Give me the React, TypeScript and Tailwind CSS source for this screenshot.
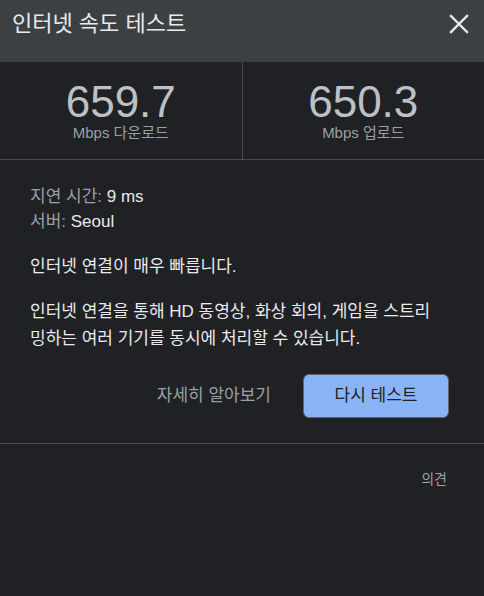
import React from 'react';

const font = { fontFamily: '"Liberation Sans", "Noto Sans CJK KR", sans-serif' };

const Stat = ({ value, label }: { value: string; label: string }) => (
  <div className="flex flex-1 flex-col items-center pt-[18px]">
    <div className="text-[44px] leading-[44px] text-[#bdc1c6]">{value}</div>
    <div className="text-[15px] leading-[18px] text-[#9aa0a6]">{label}</div>
  </div>
);

const App = () => {
  return (
    <div className="h-[596px] w-[484px] bg-[#202124] text-[#e8eaed]" style={font}>
      {/* header */}
      <div className="flex h-[62px] items-start justify-between bg-[#3c4043] pl-3 pr-[12px] pt-[9px]">
        <h1 className="text-[22px] leading-[30px] font-normal text-[#e8eaed]">인터넷 속도 테스트</h1>
        <button className="mt-[2px] flex h-[26px] w-[26px] items-center justify-center">
          <svg width="20" height="20" viewBox="0 0 20 20" fill="none" stroke="#e8eaed" strokeWidth="2.4" strokeLinecap="square">
            <path d="M2 2L18 18M18 2L2 18" />
          </svg>
        </button>
      </div>

      {/* stats */}
      <div className="flex h-[98px] border-b border-[#4a4d51]">
        <Stat value="659.7" label="Mbps 다운로드" />
        <div className="w-px bg-[#4a4d51]" />
        <Stat value="650.3" label="Mbps 업로드" />
      </div>

      {/* details */}
      <div className="border-b border-[#4a4d51] pl-[30px] pr-[40px] pt-[24px] pb-[25px] text-[17px]">
        <div className="leading-[25px]">
          <div>
            <span className="text-[#9aa0a6]">지연 시간: </span>9 ms
          </div>
          <div>
            <span className="text-[#9aa0a6]">서버: </span>Seoul
          </div>
        </div>
        <p className="mt-[20px] leading-[25px]">인터넷 연결이 매우 빠릅니다.</p>
        <p className="mt-[19px] leading-[27px]">
          인터넷 연결을 통해 HD 동영상, 화상 회의, 게임을 스트리밍하는 여러 기기를 동시에 처리할 수 있습니다.
        </p>
        <div className="-mr-[5px] mt-[22px] flex items-center justify-end gap-8">
          <button className="text-[17px] text-[#9aa0a6]">자세히 알아보기</button>
          <button className="h-[44px] w-[146px] rounded-md border border-[#5f6368] bg-[#8ab4f8] text-[17px] font-normal text-[#202124]">
            다시 테스트
          </button>
        </div>
      </div>

      {/* footer */}
      <div className="flex justify-end pr-[37px] pt-[26px]">
        <button className="text-[14px] leading-[18px] text-[#9aa0a6]">의견</button>
      </div>
    </div>
  );
};

export default App;
